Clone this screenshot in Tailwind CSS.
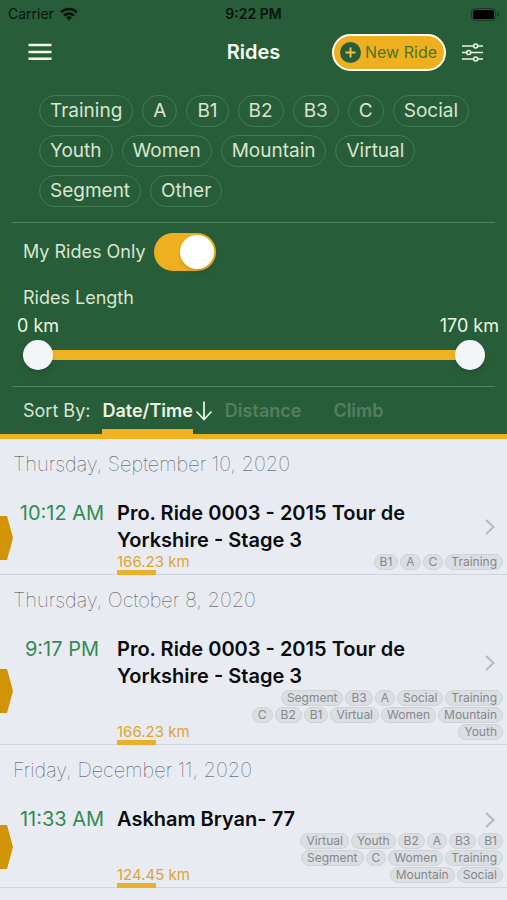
<!DOCTYPE html>
<html lang="en">
<head>
  <meta charset="UTF-8" />
  <meta name="viewport" content="width=device-width, initial-scale=1.0" />
  <title>Rides</title>
  <script src="https://cdn.jsdelivr.net/npm/@tailwindcss/browser@4"></script>
</head>
<body class="min-h-screen bg-[#e8ebf1] font-[family-name:Inter,sans-serif]">
  <header class="bg-[#285d39] border-b-5 border-[#efb223] text-[#d8e5cf]">
    <!-- Status bar -->
    <div class="grid grid-cols-3 items-center h-7 px-2 text-sm text-[#06140b]">
      <div class="flex items-center gap-1.5">
        <span>Carrier</span>
        <svg class="w-[18px] h-[14px]" viewBox="0 0 18 14" fill="none" stroke="currentColor" stroke-width="2.6">
          <path d="M1 5.2a11.6 11.6 0 0 1 16 0" />
          <path d="M4 8.6a7.2 7.2 0 0 1 10 0" />
          <path d="M9 13.6l-2.9-3a4.2 4.2 0 0 1 5.8 0z" fill="currentColor" stroke="none" />
        </svg>
      </div>
      <div class="text-center font-semibold">9:22 PM</div>
      <svg class="justify-self-end w-7 h-[13px]" viewBox="0 0 28 13">
        <rect x="0.5" y="0.5" width="24" height="12" rx="3.5" fill="none" stroke="#06140b" stroke-opacity="0.45" />
        <rect x="2" y="2" width="21" height="9" rx="2" fill="#000" />
        <path d="M26 4.5v4c1-.4 1.500-1.100 1.500-2s-.5-1.600-1.500-2z" fill="#06140b" fill-opacity="0.45" />
      </svg>
    </div>

    <!-- Nav bar -->
    <nav class="grid grid-cols-[1fr_auto_1fr] items-center h-12 px-6">
      <button aria-label="Menu" class="justify-self-start pl-1 text-[#f4fbe9]">
        <svg class="w-6 h-[18px]" viewBox="0 0 24 18" fill="none" stroke="currentColor" stroke-width="2.6">
          <path d="M0.500 2h23M0.500 9h23M0.500 15.700h23" />
        </svg>
      </button>
      <h1 class="text-xl font-semibold text-[#f6fcf1]">Rides</h1>
      <div class="flex items-center justify-end gap-4">
        <button class="flex items-center gap-1 h-[37px] pl-1.5 pr-[7px] rounded-full border-2 border-[#fffdf2] bg-[#efb01f] text-base text-[#4b7420] whitespace-nowrap">
          <svg class="w-[21px] h-[21px]" viewBox="0 0 21 21">
            <circle cx="10.500" cy="10.500" r="10.500" fill="#285d39" />
            <path d="M10.500 5.500v10M5.500 10.500h10" stroke="#efc33c" stroke-width="2" fill="none" />
          </svg>
          New Ride
        </button>
        <button aria-label="Filters" class="text-[#e9f5dd]">
          <svg class="w-[21px] h-[19px]" viewBox="0 0 21 19" fill="none" stroke="currentColor" stroke-width="1.600">
            <path d="M0 3h11.500M16 3h5M0 9.500h4.500M9 9.500h12M0 16h11.500M16 16h5" />
            <circle cx="13.700" cy="3" r="2" />
            <circle cx="6.700" cy="9.500" r="2" />
            <circle cx="13.700" cy="16" r="2" />
          </svg>
        </button>
      </div>
    </nav>

    <!-- Ride type filters -->
    <div class="flex flex-wrap gap-x-[9px] gap-y-2 pt-[19px] pb-[15px] pl-[39px] pr-7 text-[19px] *:h-8 *:px-2.5 *:leading-[30px] *:rounded-full *:border *:border-[#427a51]">
      <button>Training</button>
      <button>A</button>
      <button>B1</button>
      <button>B2</button>
      <button>B3</button>
      <button>C</button>
      <button>Social</button>
      <button>Youth</button>
      <button>Women</button>
      <button>Mountain</button>
      <button>Virtual</button>
      <button>Segment</button>
      <button>Other</button>
    </div>

    <div class="mx-3 border-y border-[#4f855d] pt-2.5 pb-4">
      <label class="flex items-center gap-2 pl-[11px] text-lg">
        My Rides Only
        <input type="checkbox" checked class="appearance-none w-[62px] h-[38px] p-0.5 rounded-full bg-[#5d8168] checked:bg-[#efb01f] before:block before:size-[34px] before:rounded-full before:bg-white before:shadow-md checked:before:translate-x-6" />
      </label>

      <div class="pt-[13px] pl-[11px] text-lg leading-7">Rides Length</div>
      <div class="flex justify-between pl-[5px] -mr-1 text-lg leading-7 text-[#eaf6e2]">
        <label for="min-length">0 km</label>
        <label for="max-length">170 km</label>
      </div>
      <div class="relative h-[30px] ml-[11px] mr-2.5 flex items-center">
        <div class="h-2.5 w-full rounded-full bg-[#efb223]"></div>
        <input id="min-length" type="range" min="0" max="170" value="0" class="absolute inset-0 w-full h-[30px] appearance-none bg-transparent pointer-events-none [&::-webkit-slider-thumb]:appearance-none [&::-webkit-slider-thumb]:pointer-events-auto [&::-webkit-slider-thumb]:size-[30px] [&::-webkit-slider-thumb]:rounded-full [&::-webkit-slider-thumb]:bg-[#f3f5f7] [&::-webkit-slider-thumb]:shadow-md" />
        <input id="max-length" type="range" min="0" max="170" value="170" class="absolute inset-0 w-full h-[30px] appearance-none bg-transparent pointer-events-none [&::-webkit-slider-thumb]:appearance-none [&::-webkit-slider-thumb]:pointer-events-auto [&::-webkit-slider-thumb]:size-[30px] [&::-webkit-slider-thumb]:rounded-full [&::-webkit-slider-thumb]:bg-[#f3f5f7] [&::-webkit-slider-thumb]:shadow-md" />
      </div>
    </div>

    <!-- Sort options -->
    <div class="flex h-[47px] pl-[23px] text-lg leading-[47px]">
      <span>Sort By:</span>
      <button class="ml-3 h-full shadow-[inset_0_-5px_0_#efb223] font-semibold text-[#eaf6e2]">Date/Time</button>
      <svg class="w-[18px] h-5 mt-3.5 ml-0.5" viewBox="0 0 18 20" fill="none" stroke="#e4f1da" stroke-width="1.800">
        <path d="M9 0.500v17.500M1.500 10.500L9 18.500l7.500-8" />
      </svg>
      <button class="ml-3 font-semibold text-[#547f61]">Distance</button>
      <button class="ml-8 font-semibold text-[#547f61]">Climb</button>
    </div>
  </header>

  <main>
    <section>
      <h2 class="h-[61px] pl-[13px] text-xl leading-[50px] font-thin text-[#3f4247]">Thursday, September 10, 2020</h2>
      <a href="#" class="flex shadow-[inset_0_-1px_0_#d1d5db]">
        <svg class="w-[13px] h-11 self-center shrink-0" viewBox="0 0 13 44"><path d="M0 0h7l6 22-6 22H0z" fill="#d09406" /></svg>
        <div class="w-[98px] mr-1.5 shrink-0 text-center text-xl leading-[27px] text-[#338a54]">10:12 AM</div>
        <div class="grow">
          <div class="flex items-center justify-between pr-3">
            <h3 class="max-w-[330px] text-xl leading-[27px] font-semibold text-[#0b0c0f]">Pro. Ride 0003 - 2015 Tour de Yorkshire - Stage 3</h3>
            <svg class="w-2.5 h-4 shrink-0" viewBox="0 0 10 16" fill="none" stroke="#b5b8be" stroke-width="2"><path d="M1 1l7.500 7L1 15" /></svg>
          </div>
          <div class="flex items-end justify-between pr-1">
            <div class="text-[15px] leading-4 text-[#dba632] whitespace-nowrap">166.23 km<div class="w-[39px] h-[5px] bg-[#e9b02b]"></div></div>
            <div class="grid gap-px pb-[5px] text-xs leading-[14px] text-[#85888d] *:flex *:justify-end *:gap-0.5 **:[span]:px-[5px] **:[span]:rounded-full **:[span]:border **:[span]:border-[#cfd2d7] **:[span]:bg-[#dbdee3]">
              <div><span>B1</span><span>A</span><span>C</span><span>Training</span></div>
            </div>
          </div>
        </div>
      </a>
    </section>

    <section>
      <h2 class="h-[61px] pl-[13px] text-xl leading-[50px] font-thin text-[#3f4247]">Thursday, October 8, 2020</h2>
      <a href="#" class="flex shadow-[inset_0_-1px_0_#d1d5db]">
        <svg class="w-[13px] h-11 self-center shrink-0" viewBox="0 0 13 44"><path d="M0 0h7l6 22-6 22H0z" fill="#d09406" /></svg>
        <div class="w-[98px] mr-1.5 shrink-0 text-center text-xl leading-[27px] text-[#338a54]">9:17 PM</div>
        <div class="grow">
          <div class="flex items-center justify-between pr-3">
            <h3 class="max-w-[330px] text-xl leading-[27px] font-semibold text-[#0b0c0f]">Pro. Ride 0003 - 2015 Tour de Yorkshire - Stage 3</h3>
            <svg class="w-2.5 h-4 shrink-0" viewBox="0 0 10 16" fill="none" stroke="#b5b8be" stroke-width="2"><path d="M1 1l7.500 7L1 15" /></svg>
          </div>
          <div class="flex items-end justify-between pr-1">
            <div class="text-[15px] leading-4 text-[#dba632] whitespace-nowrap">166.23 km<div class="w-[39px] h-[5px] bg-[#e9b02b]"></div></div>
            <div class="grid gap-px pb-[5px] text-xs leading-[14px] text-[#85888d] *:flex *:justify-end *:gap-0.5 **:[span]:px-[5px] **:[span]:rounded-full **:[span]:border **:[span]:border-[#cfd2d7] **:[span]:bg-[#dbdee3]">
              <div><span>Segment</span><span>B3</span><span>A</span><span>Social</span><span>Training</span></div>
              <div><span>C</span><span>B2</span><span>B1</span><span>Virtual</span><span>Women</span><span>Mountain</span></div>
              <div><span>Youth</span></div>
            </div>
          </div>
        </div>
      </a>
    </section>

    <section>
      <h2 class="h-[61px] pl-[13px] text-xl leading-[50px] font-thin text-[#3f4247]">Friday, December 11, 2020</h2>
      <a href="#" class="flex shadow-[inset_0_-1px_0_#d1d5db]">
        <svg class="w-[13px] h-11 self-center shrink-0" viewBox="0 0 13 44"><path d="M0 0h7l6 22-6 22H0z" fill="#d09406" /></svg>
        <div class="w-[98px] mr-1.5 shrink-0 text-center text-xl leading-[27px] text-[#338a54]">11:33 AM</div>
        <div class="grow">
          <div class="flex items-center justify-between pr-3">
            <h3 class="max-w-[330px] text-xl leading-[27px] font-semibold text-[#0b0c0f]">Askham Bryan- 77</h3>
            <svg class="w-2.5 h-4 shrink-0" viewBox="0 0 10 16" fill="none" stroke="#b5b8be" stroke-width="2"><path d="M1 1l7.500 7L1 15" /></svg>
          </div>
          <div class="flex items-end justify-between pr-1">
            <div class="text-[15px] leading-4 text-[#dba632] whitespace-nowrap">124.45 km<div class="w-[39px] h-[5px] bg-[#e9b02b]"></div></div>
            <div class="grid gap-px pb-[5px] text-xs leading-[14px] text-[#85888d] *:flex *:justify-end *:gap-0.5 **:[span]:px-[5px] **:[span]:rounded-full **:[span]:border **:[span]:border-[#cfd2d7] **:[span]:bg-[#dbdee3]">
              <div><span>Virtual</span><span>Youth</span><span>B2</span><span>A</span><span>B3</span><span>B1</span></div>
              <div><span>Segment</span><span>C</span><span>Women</span><span>Training</span></div>
              <div><span>Mountain</span><span>Social</span></div>
            </div>
          </div>
        </div>
      </a>
    </section>
  </main>
</body>
</html>
